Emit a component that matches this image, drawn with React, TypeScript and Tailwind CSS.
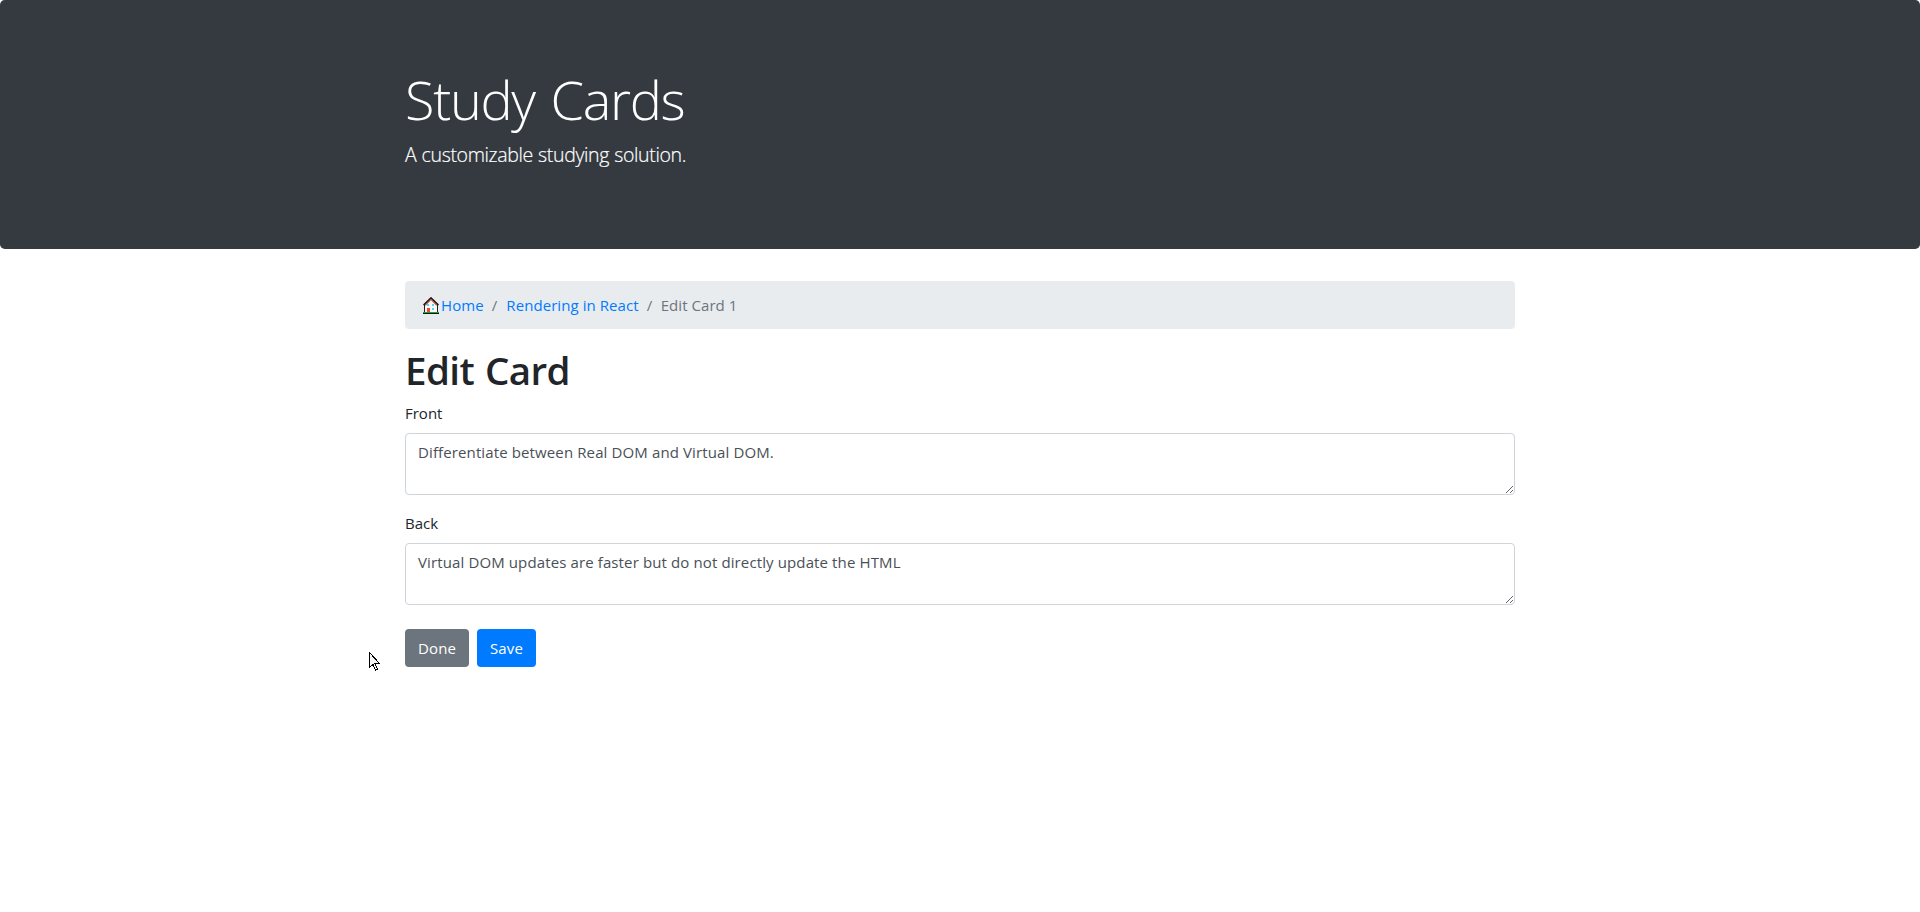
import React from "react";

function HouseIcon() {
  return (
    <svg width="16" height="17" viewBox="0 0 16 17" aria-hidden="true">
      <path d="M2 8 8 2l6 6v8H2z" fill="#f7f8f9" />
      <path d="M1 7h1v9H1zM14 7h1v9h-1z" fill="#222" shapeRendering="crispEdges" />
      <path d="M2.200 8.200 8 2.400l5.800 5.800" fill="none" stroke="#c8503a" strokeWidth="1.300" />
      <path d="M.5 8 8 .8 15.500 8" fill="none" stroke="#17120f" strokeWidth="1.400" />
      <g shapeRendering="crispEdges">
        <path d="M4 7h2v2H4zM9 7h2v2H9zM9 11h2v2H9z" fill="#50d5f7" />
        <path d="M4 11h3v4H4z" fill="#ee4936" />
        <path d="M0 15h16v1H0z" fill="#19a338" />
        <path d="M0 16h16v1H0z" fill="#101810" />
      </g>
    </svg>
  );
}

function Cursor() {
  return (
    <svg className="absolute left-[369px] top-[652px]" width="12" height="20" viewBox="0 0 12 20" shapeRendering="crispEdges" aria-hidden="true">
      <path
        d="M.5.5v15L4 12.500l2.500 5.500 2-.8-2.500-5.700h4.500z"
        fill="#f4f4f4"
        stroke="#000"
        strokeWidth="1"
      />
    </svg>
  );
}

function Field({ id, label, value }: { id: string; label: string; value: string }) {
  return (
    <div className="mb-4 flex flex-col">
      <label htmlFor={id} className="mb-2 h-6 text-[15px] leading-6 text-[#212529]">
        {label}
      </label>
      <textarea
        id={id}
        rows={2}
        defaultValue={value}
        spellCheck={false}
        className="block h-[62px] w-full resize-y rounded border border-[#ced4da] bg-white px-3 py-1.5 text-[15px] leading-6 tracking-[0.12px] text-[#495057] outline-none"
      />
    </div>
  );
}

export default function App() {
  return (
    <div className="min-h-screen bg-white font-['Open_Sans','Noto_Sans',sans-serif] text-[15px] leading-6 text-[#212529]">
      <header className="mb-8 h-[249.2px] rounded-[4.8px] bg-[#343a40] py-16 text-white">
        <div className="mx-auto w-[1110px]">
          <h1 className="mb-1.5 pt-0.5 text-[54px] leading-[67.2px] font-light tracking-[-1.3px] [word-spacing:3px]">Study Cards</h1>
          <p className="pt-px text-[19.5px] leading-[30px] font-light tracking-[-0.35px] [word-spacing:0.5px] [-webkit-text-stroke:0.2px_white]">A customizable studying solution.</p>
        </div>
      </header>
      <main className="mx-auto w-[1110px]">
        <nav className="mb-4 flex h-12 items-center rounded bg-[#e9ecef] px-4">
          <a href="#" className="flex items-center text-[#007bff]">
            <span className="mr-0.5 ml-0.5 flex"><HouseIcon /></span>
            <span className="tracking-[0.1px]">Home</span>
          </a>
          <span className="pr-[9px] pl-2 text-[#6c757d]">/</span>
          <a href="#" className="tracking-[0.07px] text-[#007bff]">Rendering in React</a>
          <span className="pr-[8.5px] pl-2 text-[#6c757d]">/</span>
          <span className="tracking-[0.06px] text-[#6c757d]">Edit Card 1</span>
        </nav>
        <h1 className="mb-[7px] pt-px text-[38.5px] leading-[48px] font-semibold tracking-[-0.6px] [word-spacing:1.5px]">Edit Card</h1>
        <form>
          <Field id="front" label="Front" value="Differentiate between Real DOM and Virtual DOM." />
          <Field id="back" label="Back" value="Virtual DOM updates are faster but do not directly update the HTML" />
          <div className="flex gap-2 pt-2">
            <button type="button" className="h-[38px] w-16 rounded bg-[#6c757d] tracking-[0.15px] text-white">Done</button>
            <button type="button" className="h-[38px] w-[59px] rounded bg-[#007bff] tracking-[0.15px] text-white">Save</button>
          </div>
        </form>
      </main>
      <Cursor />
    </div>
  );
}
